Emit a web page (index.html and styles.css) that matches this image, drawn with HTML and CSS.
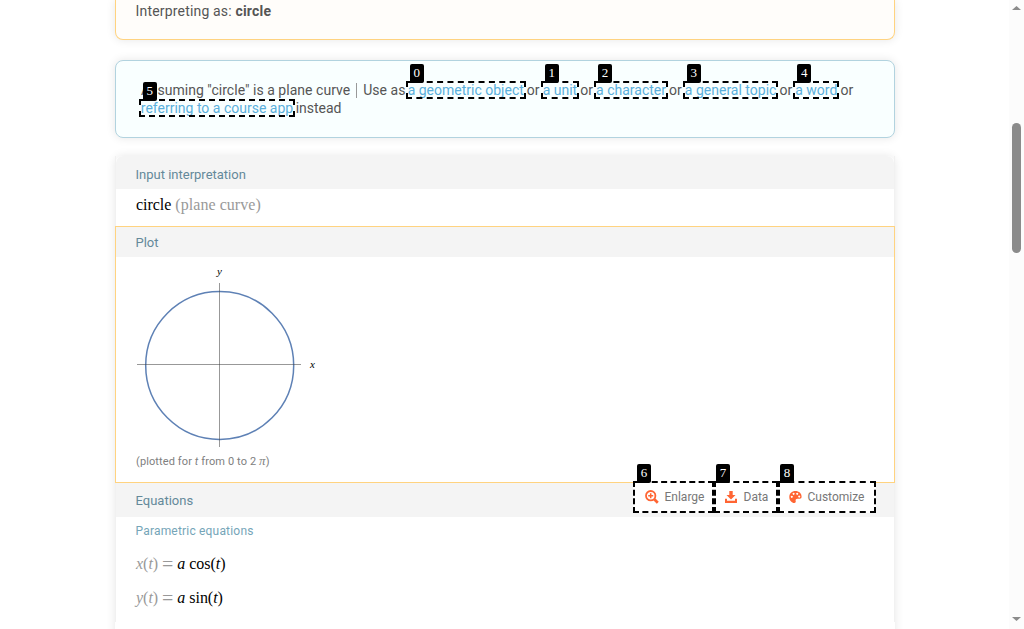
FILE: index.html
```html
<!DOCTYPE html>
<html lang="en">
<head>
<meta charset="utf-8">
<title>circle</title>
<link rel="stylesheet" href="styles.css">
</head>
<body>
<div class="page">
  <main class="content">
    <section class="card interpreting">Interpreting as: <b>circle</b></section>
    <section class="card assumptions">
      <p><span class="lead">Assuming "circle" is a plane curve <i class="bar"></i> Use as</span> <a class="hint">a geometric object<span class="badge">0</span></a> or <a class="hint">a unit<span class="badge">1</span></a> or <a class="hint">a character<span class="badge">2</span></a> or <a class="hint">a general topic<span class="badge">3</span></a> or <a class="hint">a word<span class="badge">4</span></a> or<br><a class="hint last">referring to a course app<span class="badge">5</span></a> instead</p>
    </section>
    <div class="pods">
      <section class="pod input">
        <h2>Input interpretation</h2>
        <p class="math">circle <span class="dim">(plane curve)</span></p>
      </section>
      <section class="pod plot">
        <h2>Plot</h2>
        <svg class="graph" width="190" height="190" viewBox="0 0 190 190">
          <circle cx="83.7" cy="108.5" r="74" fill="none" stroke="#5e81b5" stroke-width="1.5"/>
          <path d="M1 107.5H165M83.5 26V190" stroke="#444" stroke-opacity=".55" stroke-width="1"/>
          <text x="83.5" y="18" text-anchor="middle">y</text>
          <text x="176.500" y="111" text-anchor="middle">x</text>
        </svg>
        <p class="caption">(plotted for <i>t</i> from 0 to 2 <i class="pi">π</i>)</p>
        <div class="tools">
          <a class="tool enlarge"><svg width="14" height="14" viewBox="0 0 14 14"><circle cx="5.700" cy="5.700" r="4.700" fill="none" stroke="#ff6533" stroke-width="1.800"/><path d="M5.700 3.200v5M3.200 5.700h5" stroke="#ff6533" stroke-width="1.500"/><path d="M9.300 9.300L12.800 12.800" stroke="#ff6533" stroke-width="2.700"/></svg>Enlarge<span class="badge">6</span></a>
          <a class="tool data"><svg width="12" height="14" viewBox="0 0 12 14"><path fill="#ff6533" d="M4.300 1h3.400v4h2.800L6 9.500 1.500 5h2.800zM0 8.700h2v2.100h8V8.700h2V13H0z"/></svg>Data<span class="badge">7</span></a>
          <a class="tool customize"><svg width="13" height="14" viewBox="0 0 13 14"><path fill="#ff6533" fill-rule="evenodd" d="M6.500 1C2.800 1 .3 3.500.3 6.900c0 3.600 2.600 6 5 6 1.300 0 1.700-.8 1.400-1.800-.4-1.400.2-2.300 1.700-2.300h2.200c1.400 0 2-.8 2-2.200C12.600 3.300 10 1 6.500 1zM2.800 5.800a1 1 0 1 0 .01 0zM4.600 2.700a1 1 0 1 0 .01 0zM8.200 2.700a1 1 0 1 0 .01 0zM10.200 5.500a1 1 0 1 0 .01 0z"/></svg>Customize<span class="badge">8</span></a>
        </div>
      </section>
      <section class="pod equations">
        <h2>Equations</h2>
        <h3>Parametric equations</h3>
        <p class="math eq"><span class="dim"><i>x</i>(<i>t</i>) <span class="equals">=</span></span> <i>a</i> cos(<i>t</i>)</p>
        <p class="math eq"><span class="dim"><i>y</i>(<i>t</i>) <span class="equals">=</span></span> <i>a</i> sin(<i>t</i>)</p>
      </section>
    </div>
  </main>
  <aside class="scrollbar">
    <svg width="9" height="4" viewBox="0 0 9 4"><path d="M0 4L4.500 0 9 4z" fill="#8b8b8b"/></svg>
    <div class="track"><div class="thumb"></div></div>
    <svg width="9" height="4" viewBox="0 0 9 4"><path d="M0 0H9L4.500 4z" fill="#8b8b8b"/></svg>
  </aside>
</div>
</body>
</html>
```
FILE: styles.css
```css
* { box-sizing: border-box; }
body { margin: 0; background: #fff; font: 14px/18px Roboto, sans-serif; color: #555; }
h2, h3, p { margin: 0; font-weight: 400; }
.page { display: flex; height: 629px; overflow: hidden; }
.content { width: 780px; margin-left: 115px; }
.card { border: 1px solid; border-radius: 8px; box-shadow: 0 0 10px rgba(0,0,0,.1); }
.interpreting { height: 40px; padding: 2px 19.5px; border-color: #ffd380; border-top: 0; border-radius: 0 0 8px 8px; background: #fffdfa; letter-spacing: .18px; }
.assumptions { height: 78px; margin-top: 20px; padding: 20px 20px 0 24px; border-color: #b2d3df; background: #f9ffff; white-space: nowrap; word-spacing: -.4px; }
.lead { margin-left: 1px; margin-right: -.9px; word-spacing: 0; letter-spacing: .03px; }
.bar { display: inline-block; width: 1px; height: 15px; margin: 0 2.5px; background: #999; vertical-align: -3px; }
.hint { position: relative; display: inline-block; height: 14px; line-height: 14px; color: #5bafdc; outline: 2px dashed #000; word-spacing: 0; }
.last { margin-left: .8px; margin-right: -.6px; }
.badge { position: absolute; left: 2px; top: -19px; width: 14px; height: 19px; border-radius: 2px; background: #000; color: #fff; font: 13px/18px "Liberation Serif", serif; text-align: center; letter-spacing: 0; }
.pods { margin-top: 18px; height: 500px; border-radius: 8px 8px 0 0; box-shadow: 0 0 10px rgba(0,0,0,.1); }
.pod { position: relative; border: 0 solid #f1f1f1; border-width: 0 1px; }
h2 { height: 30px; padding: 2px 19.5px 0; background: #f4f4f4; color: #64899a; font-size: 13px; line-height: 27px; }
.input { height: 70px; }
.input h2 { height: 33px; padding-top: 5px; border-radius: 7px 7px 0 0; }
.math { padding: 0 20px; color: #000; font: 16px/20px "Liberation Serif", serif; letter-spacing: -.03px; }
.input .math { margin-top: 6px; }
.input .dim { letter-spacing: .05px; }
.dim { color: #999; }
.plot { height: 257px; border: 1px solid #ffd380; z-index: 1; }
.graph { display: block; margin-left: 20px; font: italic 11px "Liberation Serif", serif; }
.caption { padding: 0 20px; margin-top: 6px; font-size: 11px; letter-spacing: .11px; color: #808080; }
.pi { font-family: "Liberation Serif", serif; font-size: 13px; line-height: 10px; }
.tools { position: absolute; top: 254px; right: 18px; display: flex; height: 32px; color: #777; font-size: 12px; background: #fff; }
.tool { position: relative; display: flex; align-items: center; gap: 6.5px; border: 2px dashed #000; padding-left: 9px; white-space: nowrap; }
.enlarge { width: 81px; padding-left: 10px; gap: 5.5px; }
.data { width: 64px; }
.data .badge, .customize .badge { left: 0; }
.customize { width: 98px; gap: 5.5px; }
.equations h2 { height: 34px; padding-top: 4px; }
h3 { margin: 5px 0 14px; padding: 0 19.5px; font-size: 12px; letter-spacing: .19px; color: #75a5b8; }
.eq { height: 34px; white-space: nowrap; }
.equals { position: relative; top: 2px; font-size: 20px; line-height: 16px; }
.scrollbar { width: 15px; margin-left: auto; padding: 6px 3px 8px; display: flex; flex-direction: column; background: #fcfcfc; }
.scrollbar svg { display: block; flex: none; }
.track { flex: 1; padding-top: 113px; }
.thumb { height: 130px; border-radius: 5px; background: #8b8b8b; }
```
